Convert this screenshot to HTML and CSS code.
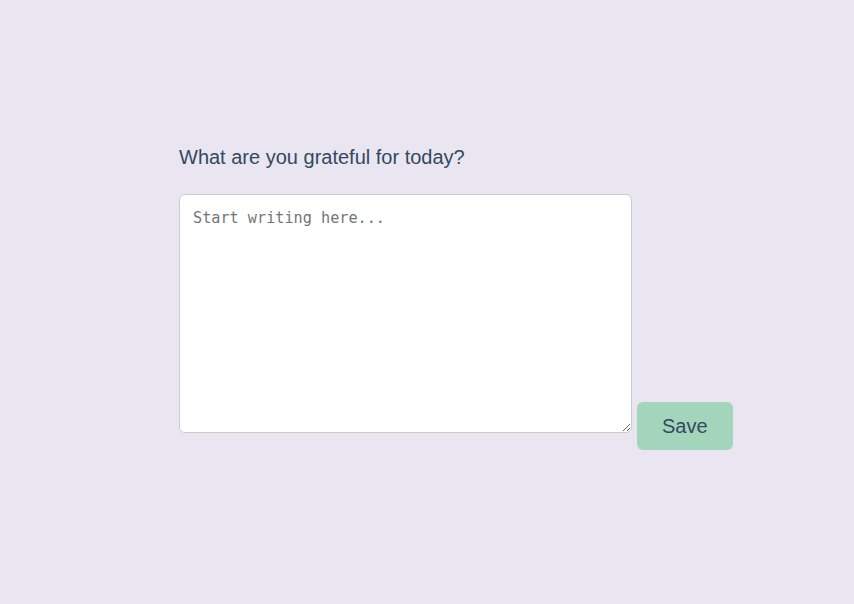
FILE: index.html
```html
<!DOCTYPE html>
<html lang="en">
<head>
<meta charset="utf-8">
<title>Gratitude Journal</title>
<link rel="stylesheet" href="styles.css">
</head>
<body>
<main class="journal">
  <label class="prompt" for="entry">What are you grateful for today?</label>
  <div class="entry-row"><textarea id="entry" class="entry" placeholder="Start writing here..."></textarea> <button class="save" type="button">Save</button></div>
</main>
</body>
</html>
```
FILE: styles.css
```css
html, body {
  margin: 0;
  padding: 0;
  background: #e9e6f1;
  min-height: 100%;
}
body {
  font-family: "Liberation Sans", Arial, sans-serif;
}
.journal {
  padding: 146px 0 0 179px;
}
.prompt {
  display: block;
  font-size: 20px;
  line-height: 23px;
  color: #34495e;
  margin-bottom: 25px;
}
.entry-row {
  font-size: 18px;
}
.entry {
  box-sizing: border-box;
  width: 453px;
  height: 239px;
  padding: 13px 13px 11px;
  margin: 0;
  border: 1px solid #cccccc;
  border-radius: 6px;
  background: #ffffff;
  font-family: "DejaVu Sans Mono", monospace;
  font-size: 15.2px;
  line-height: 20px;
  color: #333;
  vertical-align: baseline;
}
.entry::placeholder {
  color: #757575;
}
.save {
  box-sizing: border-box;
  height: 48px;
  padding: 12px 25px;
  margin: 0;
  border: none;
  border-radius: 6px;
  background: #a3d5bd;
  color: #34495e;
  font-family: "Liberation Sans", Arial, sans-serif;
  font-size: 20px;
  line-height: 24px;
  cursor: pointer;
}
```
